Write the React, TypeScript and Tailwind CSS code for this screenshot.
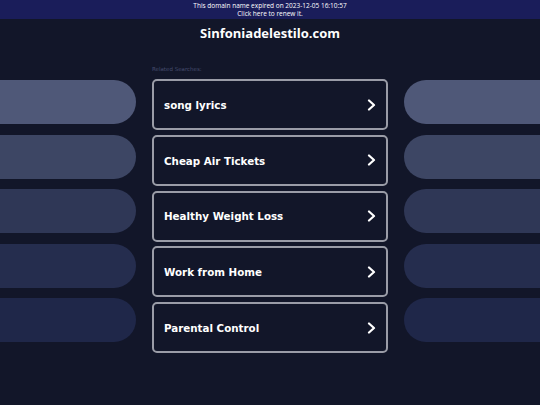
const searches = ["song lyrics", "Cheap Air Tickets", "Healthy Weight Loss", "Work from Home", "Parental Control"];
const bars = ["bg-[#4f5878]", "bg-[#3d4664]", "bg-[#2f3756]", "bg-[#252d4e]", "bg-[#1f2749]"];

function Chevron() {
  return (
    <svg width="9" height="12" viewBox="0 0 9 12" fill="none">
      <polyline points="2,1.5 7,6 2,10.5" stroke="white" strokeWidth="2.2" strokeLinecap="round" strokeLinejoin="round" />
    </svg>
  );
}

export default function App() {
  return (
    <div className="w-[540px] h-[405px] bg-[#121629] overflow-hidden flex flex-col">
      {/* expiry banner */}
      <div className="h-[19px] bg-[#1a1d5a] flex flex-col items-center justify-center text-white text-[6.5px] leading-[8px] font-['Open_Sans',sans-serif]">
        <span>This domain name expired on 2023-12-05 16:10:57</span>
        <span>Click here to renew it.</span>
      </div>

      <div className="h-[29px] flex items-center justify-center pt-[1px]">
        <h1 className="text-white font-bold text-[13px] font-['Open_Sans',sans-serif]">Sinfoniadelestilo.com</h1>
      </div>

      <div className="flex gap-4">
        <div className="w-[136px] flex flex-col gap-[10.5px] pt-[32px]">
          {bars.map((b) => (
            <div key={b} className={`h-[44px] rounded-r-full ${b}`} />
          ))}
        </div>

        <div className="w-[236px] flex flex-col">
          <div className="h-[31px] flex items-end pb-[6px]">
            <span className="text-[5.5px] text-[#454c6e] font-['DejaVu_Sans',sans-serif]">Related Searches:</span>
          </div>
          <div className="flex flex-col gap-[4.75px]">
            {searches.map((s) => (
              <div key={s} className="h-[51px] rounded-[5px] border-2 border-[#9a9ca7] flex items-center justify-between pl-[10px] pr-[10px]">
                <span className="text-white font-bold text-[10.3px] pt-[2px] font-['DejaVu_Sans',sans-serif]">{s}</span>
                <Chevron />
              </div>
            ))}
          </div>
        </div>

        <div className="w-[136px] flex flex-col gap-[10.5px] pt-[32px]">
          {bars.map((b) => (
            <div key={b} className={`h-[44px] rounded-l-full ${b}`} />
          ))}
        </div>
      </div>
    </div>
  );
}
